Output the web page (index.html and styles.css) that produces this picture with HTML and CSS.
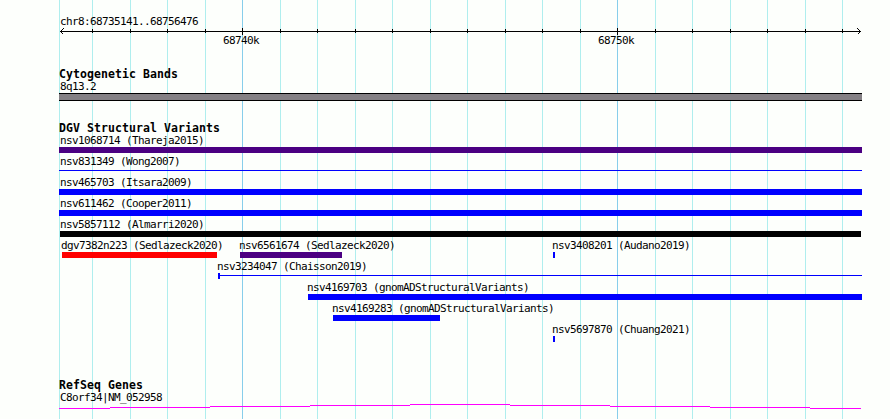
FILE: index.html
```html
<!DOCTYPE html>
<html lang="en">
<head>
<meta charset="utf-8">
<title>chr8:68735141..68756476</title>
<link rel="stylesheet" href="styles.css">
</head>
<body>
<main class="browser">
  <svg class="gridlines" width="890" height="419" shape-rendering="crispEdges" aria-hidden="true">
    <path class="minor" d="M59.5 0V419M92.5 0V419M130.5 0V419M167.5 0V419M205.5 0V419M280.5 0V419M317.5 0V419M355.5 0V419M392.5 0V419M430.5 0V419M467.5 0V419M505.5 0V419M542.5 0V419M580.5 0V419M655.5 0V419M692.5 0V419M730.5 0V419M767.5 0V419M805.5 0V419M842.5 0V419"/>
    <path class="major" d="M242.5 0V419M617.5 0V419"/>
  </svg>

  <header class="ruler">
    <div class="label">chr8:68735141..68756476</div>
    <svg class="axis" width="803" height="7" shape-rendering="crispEdges" aria-hidden="true">
      <path d="M1 3.5H802M33.5 1V5M71.5 1V5M108.5 1V5M146.5 1V5M183.5 0V7M221.5 1V5M258.5 1V5M296.5 1V5M333.5 1V5M371.5 1V5M408.5 1V5M446.5 1V5M483.5 1V5M521.5 1V5M558.5 0V7M596.5 1V5M633.5 1V5M671.5 1V5M708.5 1V5M746.5 1V5M783.5 1V5"/>
      <path d="M4.5 .5L1.5 3.5L4.5 6.5M798.5 .5L801.5 3.5L798.5 6.5"/>
    </svg>
    <div class="ticks"><span>68740k</span><span>68750k</span></div>
  </header>

  <section class="track cyto">
    <h2>Cytogenetic Bands</h2>
    <div class="label">8q13.2</div>
    <div class="band"></div>
  </section>

  <section class="track variants">
    <h2>DGV Structural Variants</h2>
    <div class="row"><div class="feature"><div class="label">nsv1068714 (Thareja2015)</div><div class="bar indigo"></div></div></div>
    <div class="row"><div class="feature"><div class="label">nsv831349 (Wong2007)</div><div class="bar thin"></div></div></div>
    <div class="row"><div class="feature"><div class="label">nsv465703 (Itsara2009)</div><div class="bar"></div></div></div>
    <div class="row"><div class="feature"><div class="label">nsv611462 (Cooper2011)</div><div class="bar"></div></div></div>
    <div class="row"><div class="feature"><div class="label">nsv5857112 (Almarri2020)</div><div class="bar black"></div></div></div>
    <div class="row trio">
      <div class="feature"><div class="label">dgv7382n223 (Sedlazeck2020)</div><div class="bar red"></div></div>
      <div class="feature"><div class="label">nsv6561674 (Sedlazeck2020)</div><div class="bar indigo short"></div></div>
      <div class="feature"><div class="label">nsv3408201 (Audano2019)</div><div class="bar point"></div></div>
    </div>
    <div class="row chaisson"><div class="feature"><div class="label">nsv3234047 (Chaisson2019)</div><div class="bar stemmed"></div></div></div>
    <div class="row gnomad-long"><div class="feature"><div class="label">nsv4169703 (gnomADStructuralVariants)</div><div class="bar"></div></div></div>
    <div class="row gnomad-short"><div class="feature"><div class="label">nsv4169283 (gnomADStructuralVariants)</div><div class="bar medium"></div></div></div>
    <div class="row chuang"><div class="feature"><div class="label">nsv5697870 (Chuang2021)</div><div class="bar point"></div></div></div>
  </section>

  <section class="track genes">
    <h2>RefSeq Genes</h2>
    <div class="label">C8orf34|NM_052958</div>
    <svg class="gene" width="803" height="5" shape-rendering="crispEdges" aria-hidden="true">
      <path d="M0 4.5H51M51 3.5H151M151 2.5H251M251 1.5H351M351 .5H451M451 1.5H551M551 2.5H651M651 3.5H751M751 4.5H802"/>
    </svg>
  </section>
</main>
</body>
</html>
```
FILE: styles.css
```css
* {
  box-sizing: border-box;
}

body {
  margin: 0;
  background: #fdfffc;
}

.browser {
  position: relative;
  width: 890px;
  height: 419px;
  padding: 14px 28px 0 59px;
  overflow: hidden;
  color: #000;
  font-family: "DejaVu Sans Mono", monospace;
  font-size: 11px;
  line-height: 14px;
  letter-spacing: -0.622px;
}

.gridlines {
  position: absolute;
  inset: 0;
}

.gridlines path,
.axis path,
.gene path {
  fill: none;
  stroke-width: 1;
}

.gridlines .minor {
  stroke: #afeeee;
}

.gridlines .major {
  stroke: #87ceeb;
}

.ruler,
.track {
  position: relative;
}

.ruler {
  height: 54px;
}

.label {
  height: 14px;
  padding-left: 1px;
  line-height: 16px;
  white-space: nowrap;
}

.axis,
.gene {
  display: block;
}

.axis path {
  stroke: #000;
}

.ticks {
  display: grid;
  grid-template-columns: 375px 1fr;
  margin-top: -1px;
  padding-left: 164px;
}

h2 {
  height: 12px;
  margin: 0;
  font-size: 11.5px;
  line-height: 12px;
  font-weight: bold;
  letter-spacing: 0.076px;
}

.cyto {
  height: 54px;
}

.cyto .label {
  height: 13px;
  line-height: 14px;
}

.band {
  height: 8px;
  background: #848084;
  border: solid #000;
  border-width: 1px 0;
}

.variants {
  height: 257px;
}

.variants h2 {
  height: 11px;
}

.row {
  display: grid;
  height: 21px;
}

.bar {
  height: 6px;
  background: #00f;
}

.indigo {
  background: #4b0082;
}

.thin {
  height: 1px;
  margin-top: 2px;
}

.black {
  margin: 0 1px;
  background: #000;
}

.red {
  width: 155px;
  margin-left: 1px;
  background: #f00;
}

.short {
  width: 102px;
  margin-left: 1px;
}

.medium {
  width: 107px;
}

.point {
  width: 2px;
  margin-left: 1px;
}

.trio {
  grid-template-columns: 178px 313px 1fr;
  padding-left: 2px;
}

.trio .label,
.chaisson .label,
.gnomad-long .label,
.gnomad-short .label,
.chuang .label {
  padding-left: 0;
}

.chaisson {
  padding-left: 159px;
}

.chaisson .label,
.gnomad-long .label,
.gnomad-short .label {
  margin-left: -1px;
}

.stemmed {
  background: linear-gradient(#00f, #00f) 0 2px / 100% 1px no-repeat;
  border-left: 2px solid #00f;
}

.gnomad-long {
  padding-left: 249px;
}

.gnomad-short {
  padding-left: 274px;
}

.chuang {
  padding-left: 493px;
}

.genes .label {
  line-height: 14px;
}

.genes .gene {
  margin-top: -1px;
}

.gene path {
  stroke: #f0f;
}
```
